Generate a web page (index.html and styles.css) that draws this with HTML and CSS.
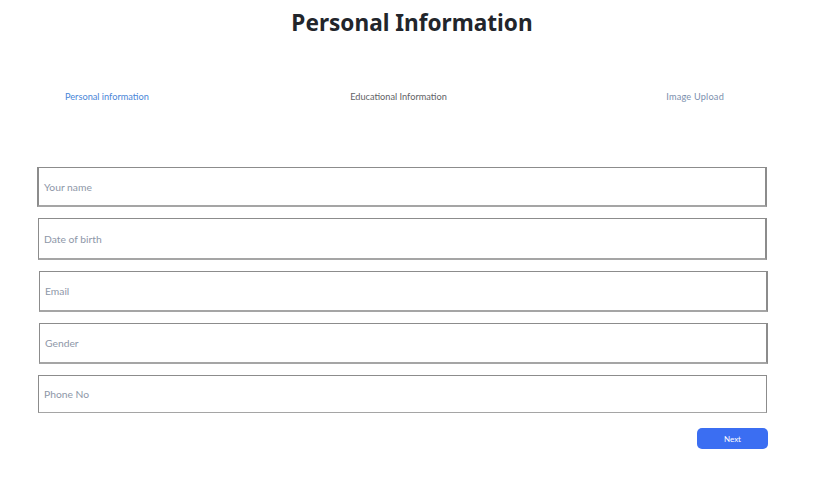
FILE: index.html
```html
<!DOCTYPE html>
<html>
<head>
<meta charset="utf-8">
<link rel="stylesheet" href="styles.css">
</head>
<body>
<div class="page">
  <h1 class="title">Personal Information</h1>
  <div class="steps">
    <span class="step step-active">Personal information</span>
    <span class="step step-mid">Educational Information</span>
    <span class="step step-last">Image Upload</span>
  </div>
  <form class="form">
    <div class="field f1">Your name</div>
    <div class="field f2">Date of birth</div>
    <div class="field f3">Email</div>
    <div class="field f4">Gender</div>
    <div class="field f5">Phone No</div>
    <div class="actions"><button type="button" class="next">Next</button></div>
  </form>
</div>
</body>
</html>
```
FILE: styles.css
```css
html, body { margin: 0; padding: 0; background: #fff; }
body { font-family: Lato, "Noto Sans", sans-serif; width: 830px; height: 488px; overflow: hidden; }
.page { padding-top: 8px; }
.title {
  margin: 0;
  text-align: center;
  font-family: "Noto Sans", Lato, sans-serif;
  font-size: 22.6px;
  font-weight: 700;
  color: #22252b;
  line-height: 30px;
  padding-right: 6px;
}
.steps {
  display: flex;
  margin-top: 53px;
  padding: 0 106px 0 65px;
  justify-content: space-between;
  font-size: 9.2px;
  line-height: 12px;
}
.step-active { color: #4a86d8; }
.step-mid { color: #5f6266; padding-right: 18px; }
.step-last { color: #7b8fae; letter-spacing: 0.2px; }
.form {
  margin-top: 64px;
  padding-left: 38px;
  width: 729px;
  display: flex;
  flex-direction: column;
  gap: 11px;
}
.field {
  border: 1px solid #8c8c8c;
  border-right-width: 2px;
  border-bottom-width: 2px;
  border-bottom-color: #a5a5a5;
  box-sizing: border-box;
  height: 41px;
  display: flex;
  align-items: center;
  padding-left: 5px;
  font-size: 10.3px;
  color: #8e97a8;
}
.f1 { margin-left: -1px; border-left-width: 2px; height: 40px; }
.f2 { height: 42px; }
.f3 { margin-left: 1px; margin-right: -1px; }
.f4 { margin-left: 1px; margin-right: -1px; }
.f5 { height: 38px; border-bottom-width: 1px; border-right-width: 1px; }
.actions { display: flex; justify-content: flex-end; margin-top: 4px; margin-right: -1px; }
.next {
  width: 71px;
  height: 21px;
  border: none;
  border-radius: 5px;
  background: #3b6ef2;
  color: #fff;
  font-family: Lato, sans-serif;
  font-size: 8px;
  padding: 0;
}
```
